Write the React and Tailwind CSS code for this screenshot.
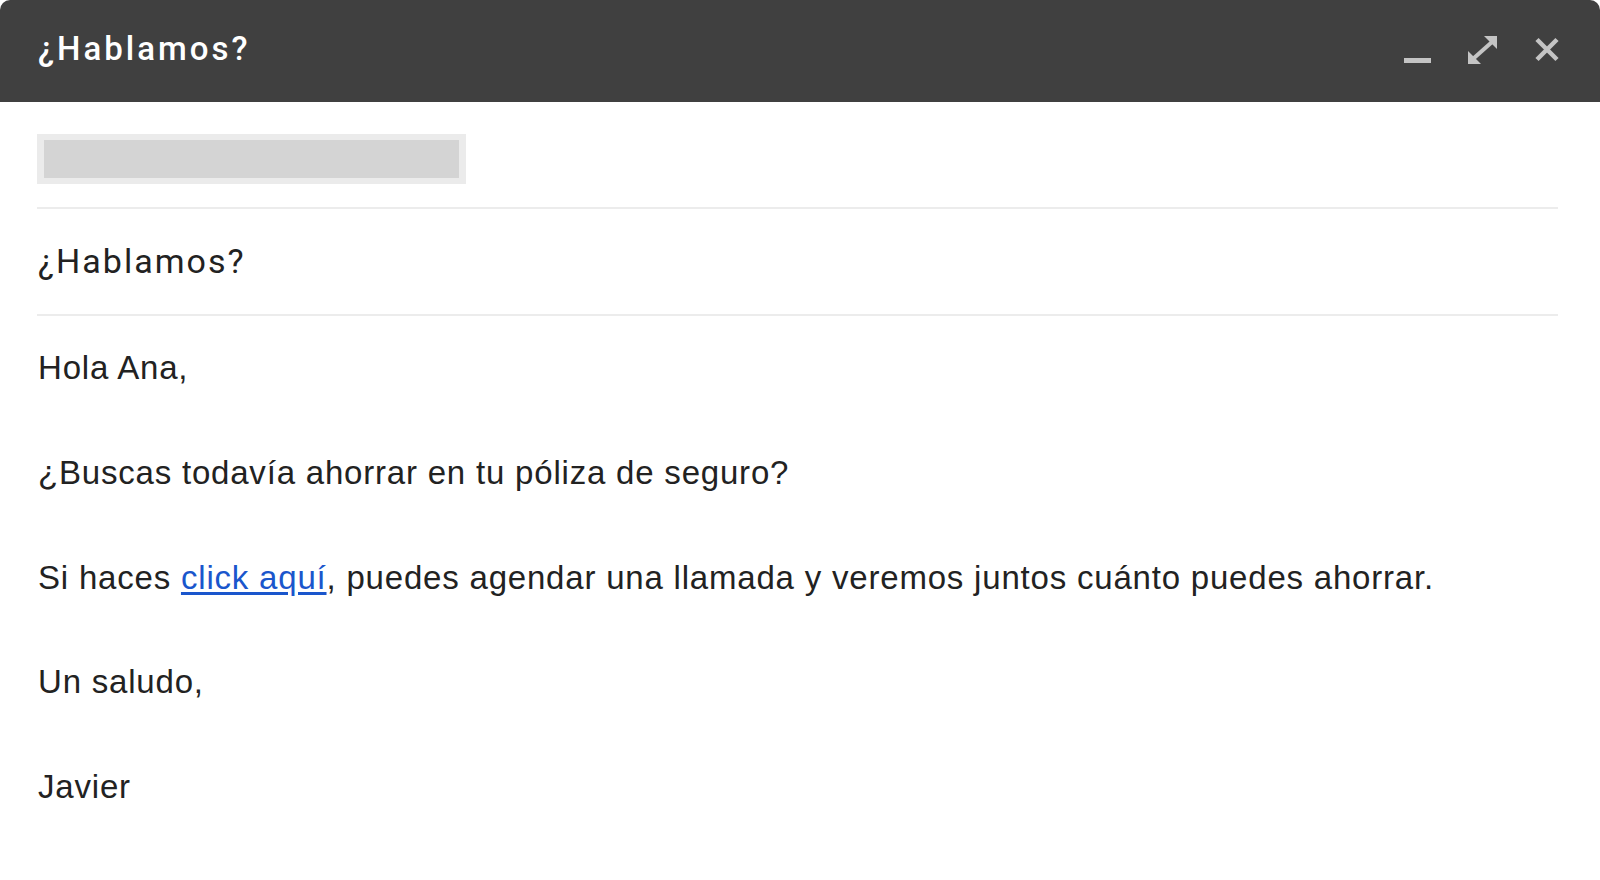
import React from 'react'

function MinimizeIcon() {
  return (
    <svg width="28" height="28" viewBox="0 0 28 28" className="block">
      <rect x="0" y="22" width="27" height="5" fill="#c4c4c4" />
    </svg>
  )
}

function ExpandIcon() {
  return (
    <svg width="30" height="28" viewBox="0 0 30 28" className="block">
      <line x1="6" y1="22" x2="24" y2="6" stroke="#c4c4c4" strokeWidth="4" />
      <polygon points="29,0 29,13 16,0" fill="#c4c4c4" />
      <polygon points="0,28 0,15 13,28" fill="#c4c4c4" />
    </svg>
  )
}

function CloseIcon() {
  return (
    <svg width="26" height="27" viewBox="0 0 26 27" className="block">
      <path d="M3 3.5 L23 23.5 M23 3.5 L3 23.5" stroke="#c4c4c4" strokeWidth="4.5" />
    </svg>
  )
}

export default function App() {
  return (
    <div className="min-h-screen bg-white">
      {/* Header */}
      <header className="flex h-[102px] items-center justify-between rounded-t-[10px] bg-[#404040] pl-[38px] pr-[40px]">
        <h1 className="-mt-[5px] font-['Roboto',sans-serif] text-[33px] font-medium leading-none tracking-[3px] text-white">
          ¿Hablamos?
        </h1>
        <div className="-mt-[3px] flex items-center gap-[36px]">
          <MinimizeIcon />
          <ExpandIcon />
          <CloseIcon />
        </div>
      </header>

      <div className="pl-[37px] pr-[42px]">
        {/* Recipients */}
        <div className="pt-[32px] pb-[23px]">
          <div className="h-[50px] w-[429px] bg-[#ebebeb] p-[6px_7px]">
            <div className="h-full w-full bg-[#d4d4d4]" />
          </div>
        </div>
        <div className="h-[2px] bg-[#ececec]" />

        {/* Subject */}
        <div className="flex h-[105px] items-center pl-[1px] font-['Roboto',sans-serif] text-[34px] tracking-[2px] text-[#222]">
          ¿Hablamos?
        </div>
        <div className="h-[2px] bg-[#ececec]" />

        {/* Body */}
        <div className="pt-[26px] pl-[1px] font-['Liberation_Sans',Arial,sans-serif] text-[33px] leading-[52.4px] tracking-[0.8px] text-[#222]">
          <p>Hola Ana,</p>
          <p><br /></p>
          <p>¿Buscas todavía ahorrar en tu póliza de seguro?</p>
          <p><br /></p>
          <p>
            Si haces{' '}
            <a href="#" className="text-[#1a56cc] underline underline-offset-[3px]">
              click aquí
            </a>
            , puedes agendar una llamada y veremos juntos cuánto puedes ahorrar.
          </p>
          <p><br /></p>
          <p>Un saludo,</p>
          <p><br /></p>
          <p>Javier</p>
        </div>
      </div>
    </div>
  )
}
